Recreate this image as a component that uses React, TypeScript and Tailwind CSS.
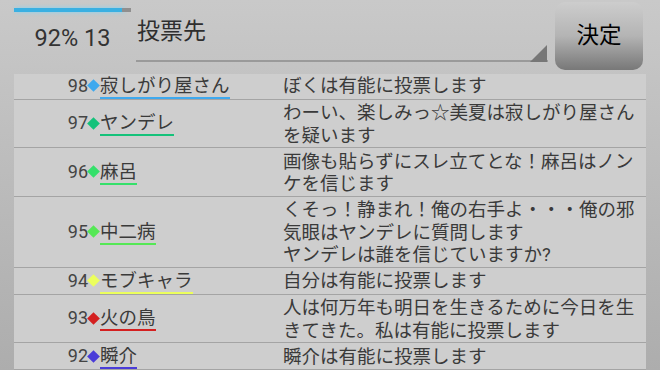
const rows = [
  {
    no: 98,
    color: "#3fa9ee",
    name: "寂しがり屋さん",
    text: "ぼくは有能に投票します",
  },
  {
    no: 97,
    color: "#14c27a",
    name: "ヤンデレ",
    text: "わーい、楽しみっ☆美夏は寂しがり屋さんを疑います",
  },
  {
    no: 96,
    color: "#35e06a",
    name: "麻呂",
    text: "画像も貼らずにスレ立てとな！麻呂はノンケを信じます",
  },
  {
    no: 95,
    color: "#55e855",
    name: "中二病",
    text: "くそっ！静まれ！俺の右手よ・・・俺の邪気眼はヤンデレに質問します\nヤンデレは誰を信じていますか?",
  },
  {
    no: 94,
    color: "#ecff5c",
    name: "モブキャラ",
    text: "自分は有能に投票します",
  },
  {
    no: 93,
    color: "#d42020",
    name: "火の鳥",
    text: "人は何万年も明日を生きるために今日を生きてきた。私は有能に投票します",
  },
  {
    no: 92,
    color: "#4a3cd8",
    name: "瞬介",
    text: "瞬介は有能に投票します",
  },
];

export default function App() {
  return (
    <div className="h-[370px] w-[660px] overflow-hidden bg-gradient-to-b from-[#c9c9c9] to-[#adadad] font-[Roboto,'Noto_Sans_CJK_JP',sans-serif]">
      {/* header */}
      <div className="flex h-[74px]">
        <div className="ml-[14px] flex w-[117px] flex-col">
          <div className="mt-[8px] flex h-[4px]">
            <div className="w-[108px] bg-[#3ab0e2] shadow-[2px_0_4px_#7fd4f5]" />
            <div className="flex-1 bg-[#8f8f8f]" />
          </div>
          <div className="mt-[13px] text-center text-[23.5px] leading-[27px] text-[#333]">
            92% 13
          </div>
        </div>
        <div className="relative ml-[5px] w-[412px]">
          <div className="mt-[17px] pl-[1px] text-[23px] leading-[30px] text-[#2e2e2e]">
            投票先
          </div>
          <div className="absolute bottom-[12px] left-0 right-0 h-[2px] bg-[#9a9a9a]" />
          <svg
            className="absolute bottom-[12px] right-[1px]"
            width="17"
            height="17"
            viewBox="0 0 17 17"
          >
            <polygon points="17,0 17,17 0,17" fill="#777" />
          </svg>
        </div>
        <div className="ml-[7px] mt-[2px] flex h-[68px] w-[88px] items-center justify-center rounded-[10px] bg-gradient-to-b from-[#cdcdcd] via-[#b4b4b4] to-[#787878] text-[22.5px] text-black">
          決定
        </div>
      </div>

      {/* list */}
      <div className="ml-[14px] h-[296px] w-[632px] overflow-hidden bg-[#cecece]">
        <div className="-mt-[1.5px]">
          {rows.map((r) => (
            <div
              key={r.no}
              className="flex border-b border-[#a4a4a4] text-[#3a3a3a]"
            >
              <div className="flex w-[269px] shrink-0 items-center pl-[50px]">
                <span className="w-[24px] text-right text-[18px] leading-[22px] text-[#444]">
                  {r.no}
                </span>
                <span
                  className="ml-[1px] mr-[2px] h-[9px] w-[9px] rotate-45"
                  style={{ backgroundColor: r.color }}
                />
                <span
                  className="mt-[3px] border-b-2 text-[18.5px] leading-[21px]"
                  style={{ borderColor: r.color }}
                >
                  {r.name}
                </span>
              </div>
              <div className="w-[358px] whitespace-pre-line pt-[2.5px] text-[18.5px] leading-[22.5px]">
                {r.text}
              </div>
            </div>
          ))}
        </div>
      </div>
    </div>
  );
}
